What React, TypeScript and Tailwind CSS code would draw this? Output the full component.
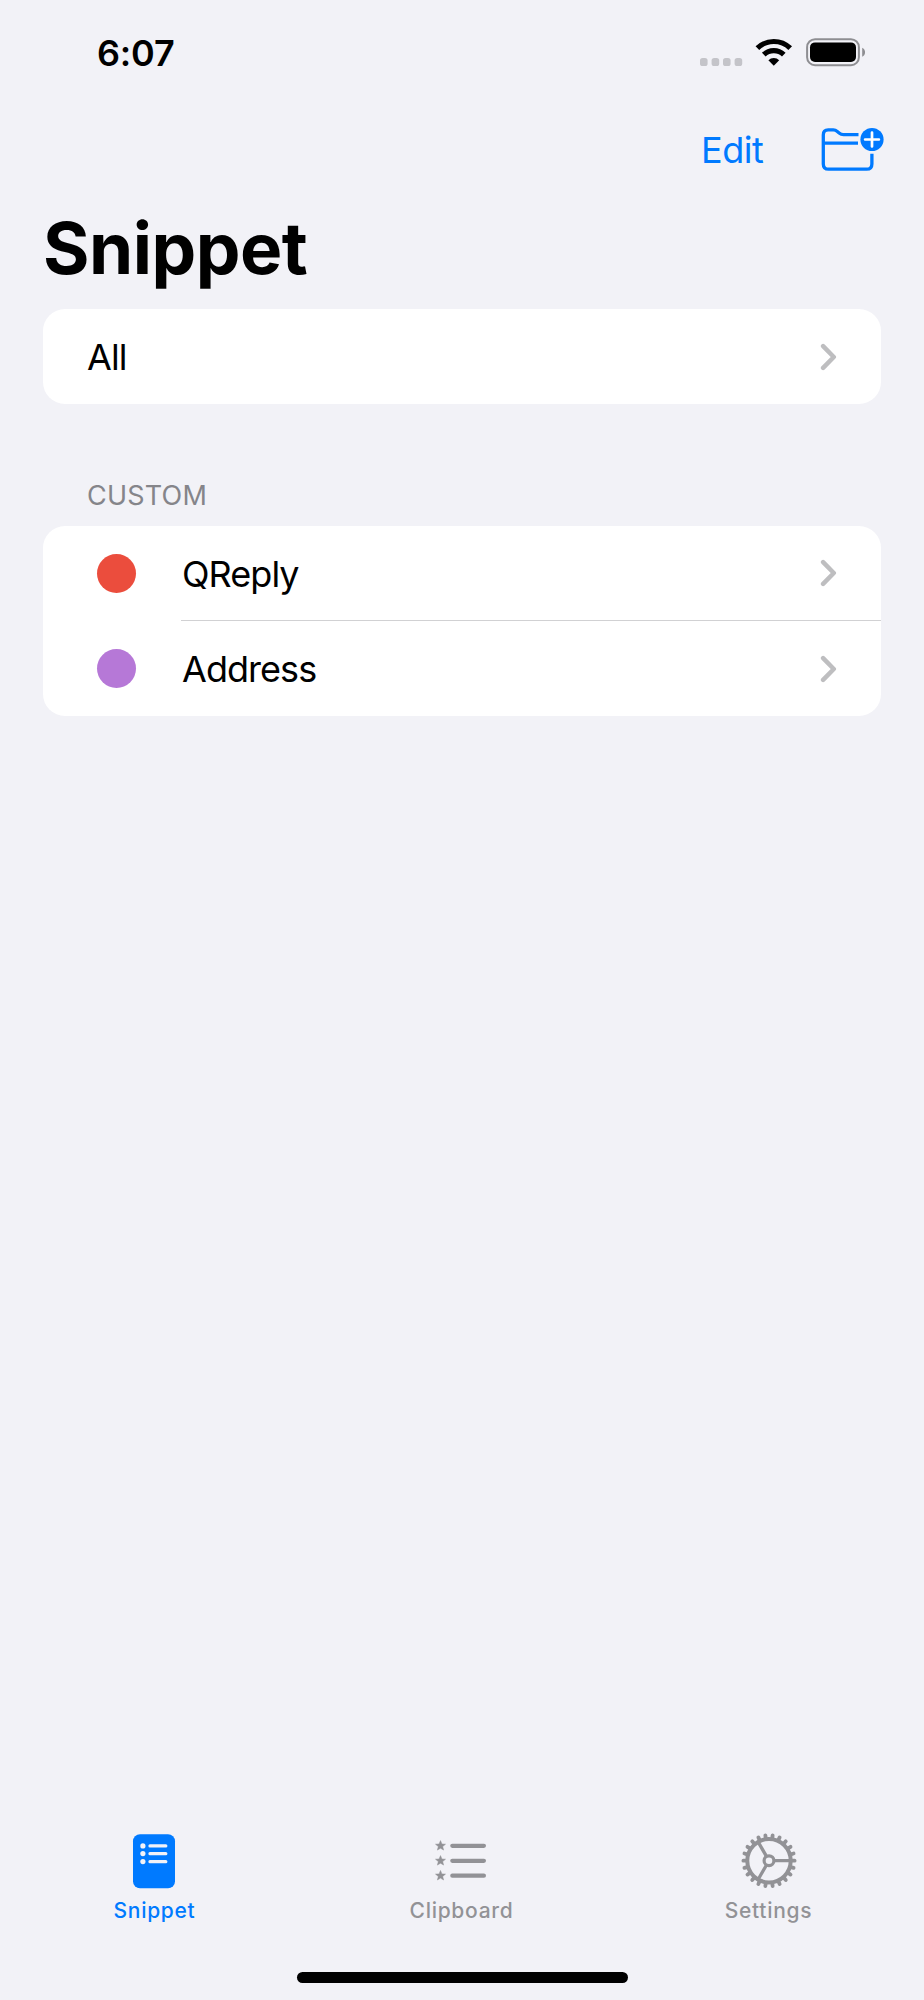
import type { ReactNode } from 'react';

interface Folder {
  name: string;
  color: string;
}

const FOLDERS: Folder[] = [
  { name: 'QReply', color: '#eb4d3d' },
  { name: 'Address', color: '#b678d7' },
];

const STAR = 'M0 -5.2 L1.4 -1.8 L5 -1.6 L2.2 .8 L3.1 4.3 L0 2.4 L-3.1 4.3 L-2.2 .8 L-5 -1.6 L-1.4 -1.8 Z';

// 22 teeth evenly spread around the gear
const TEETH = Array.from({ length: 22 }, (_, i) => ((i + 0.5) * 360) / 22);

function StatusBar() {
  return (
    <div className="h-[104px] pl-[97px] pr-[59px] flex items-start justify-between">
      <span className="mt-[31px] text-[36px] leading-[44px] font-semibold tracking-[-0.2px]">6:07</span>
      <svg className="mt-[36px]" width="166" height="32" viewBox="699 36 166 32">
        <g fill="#c4c4c9">
          <rect x="700" y="58" width="7.6" height="8" rx="2.6" />
          <rect x="711.6" y="58" width="7.6" height="8" rx="2.6" />
          <rect x="723" y="58" width="7.6" height="8" rx="2.6" />
          <rect x="734.6" y="58" width="7.6" height="8" rx="2.6" />
        </g>
        <g fill="none" stroke="#000" strokeWidth="5.2">
          <path d="M757.4 48.2a23.4 23.4 0 0 1 32.8 0" />
          <path d="M763.8 54.6a14.4 14.4 0 0 1 20 0" />
        </g>
        <path d="M768.4 60.2a7.6 7.6 0 0 1 10.8 0L773.8 65.8Z" />
        <rect x="807.1" y="39.2" width="51.8" height="26" rx="8" fill="none" stroke="#8e8e92" strokeWidth="2" />
        <rect x="810" y="42.4" width="46" height="19.6" rx="5" />
        <path d="M862.2 47.8c3.8 1.8 3.8 7.2 0 9Z" fill="#8e8e92" />
      </svg>
    </div>
  );
}

function NavBar() {
  return (
    <div className="h-[96px] pl-[701px] flex items-start text-[#007aff]">
      <button className="mt-[24px] w-[64px] text-left text-[36px] leading-[44px] tracking-[-0.5px]">Edit</button>
      <svg className="mt-[20px] ml-[53px]" width="70" height="52" viewBox="818 124 70 52">
        <g fill="none" stroke="#007aff" strokeWidth="3.3" strokeLinecap="butt" strokeLinejoin="round">
          <path d="M858.5 134.6H843.5c-2 0-3-.5-4.4-1.7l-1.8-1.5c-1.3-1.1-2.3-1.5-4-1.5h-5.1c-3.2 0-4.9 1.7-4.9 5v29c0 3.4 1.8 5.3 5.3 5.3h38c3.6 0 5.3-1.8 5.3-5.3V153.8" />
          <path d="M823.3 143.2H858" />
        </g>
        <circle cx="872" cy="139.5" r="11.6" fill="#007aff" />
        <path d="M872 132.6v13.8M865.1 139.5h13.8" stroke="#fff" strokeWidth="2.7" strokeLinecap="round" />
      </svg>
    </div>
  );
}

function Chevron() {
  return (
    <svg className="ml-auto mr-[43px] shrink-0" width="18" height="28" viewBox="0 0 18 28">
      <path d="M3.1 3.1 13.8 14 3.1 24.9" fill="none" stroke="#bebec0" strokeWidth="4.5" strokeLinecap="round" strokeLinejoin="round" />
    </svg>
  );
}

function Card({ children }: { children: ReactNode }) {
  return (
    <div className="mx-[43px] rounded-[22px] bg-white overflow-hidden text-[36px] leading-[44px] tracking-[-0.95px]">
      {children}
    </div>
  );
}

function SnippetIcon() {
  return (
    <svg width="60" height="60" viewBox="1 0 60 60">
      <rect x="9" y="3.2" width="42" height="54" rx="7" fill="#007aff" />
      <g fill="#f2f2f7">
        {[14.9, 22.6, 30.6].map((y) => (
          <g key={y}>
            <circle cx="18.9" cy={y} r="2.6" />
            <rect x="24.4" y={y - 1.55} width="19" height="3.1" rx="1.5" />
          </g>
        ))}
      </g>
    </svg>
  );
}

function ClipboardIcon() {
  return (
    <svg width="60" height="60" viewBox="1 0 60 60" fill="#929296">
      {[14.8, 29.8, 44.7].map((y) => (
        <g key={y}>
          <path d={STAR} transform={`translate(9.5 ${y})`} stroke="#929296" strokeWidth="0.5" strokeLinejoin="round" />
          <rect x="19.2" y={y - 2.1} width="35.8" height="4.2" rx="2.1" />
        </g>
      ))}
    </svg>
  );
}

function SettingsIcon() {
  return (
    <svg width="60" height="60" viewBox="0 0 60 60" fill="none" stroke="#929296">
      {TEETH.map((angle) => (
        <path key={angle} d="M30 7V4.1" strokeWidth="3.8" strokeLinecap="round" transform={`rotate(${angle} 30 29.7)`} />
      ))}
      <circle cx="30" cy="29.7" r="21.7" strokeWidth="4" />
      <circle cx="30" cy="29.7" r="4.9" strokeWidth="3.2" />
      <path d="M35.5 29.7H51M27.2 24.9 19.4 11.4M27.2 34.5 19.4 48" strokeWidth="3.3" />
    </svg>
  );
}

function Tab({ icon, label, active }: { icon: ReactNode; label: string; active?: boolean }) {
  return (
    <div className={`w-[307px] flex flex-col items-center ${active ? 'text-[#007aff]' : 'text-[#929296]'}`}>
      {icon}
      <span className="mt-[6px] text-[21px] leading-[28px] font-medium tracking-[0.7px]">{label}</span>
    </div>
  );
}

export default function App() {
  return (
    <div className="w-[924px] h-[2000px] flex flex-col bg-[#f2f2f7] text-black font-['Inter','Liberation_Sans',sans-serif] overflow-hidden">
      <StatusBar />
      <NavBar />

      <h1 className="h-[109px] pl-[43px] pt-[4px] text-[71px] leading-[88px] font-bold tracking-[-0.5px]">Snippet</h1>

      <Card>
        <div className="h-[95px] pl-[44px] flex items-center">
          <span>All</span>
          <Chevron />
        </div>
      </Card>

      <h2 className="mt-[76px] h-[46px] pl-[87px] text-[27px] leading-[32px] tracking-[0.2px] text-[#85858a]">CUSTOM</h2>

      <Card>
        {FOLDERS.map((folder, i) => (
          <div key={folder.name} className="h-[95px] pl-[54px] flex items-center">
            <span className="size-[39px] rounded-full shrink-0" style={{ backgroundColor: folder.color }} />
            <div className={`ml-[45px] pl-px h-full flex-1 flex items-center ${i < FOLDERS.length - 1 ? 'border-b border-[#d1d1d3]' : ''}`}>
              <span className="pt-px">{folder.name}</span>
              <Chevron />
            </div>
          </div>
        ))}
      </Card>

      <nav className="mt-auto h-[141px] px-[1px] flex">
        <Tab icon={<SnippetIcon />} label="Snippet" active />
        <Tab icon={<ClipboardIcon />} label="Clipboard" />
        <Tab icon={<SettingsIcon />} label="Settings" />
      </nav>
      <div className="mb-[17px] w-[331px] h-[11px] self-center rounded-full bg-black" />
    </div>
  );
}
